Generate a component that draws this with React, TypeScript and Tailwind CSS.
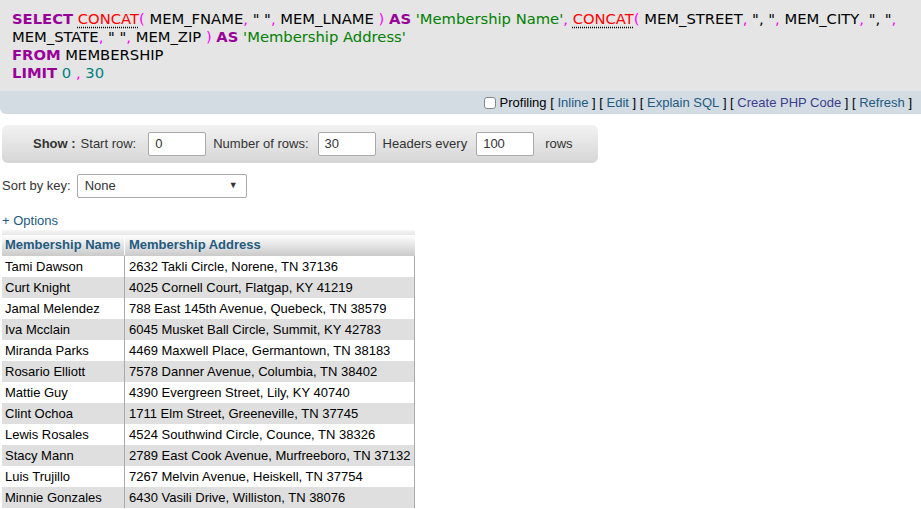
import React from "react";

const K = ({ c }: { c: string }) => <span className="font-bold text-[#990099]">{c}</span>;
const F = ({ c }: { c: string }) => (
  <span className="text-[#ff0000] underline decoration-dotted decoration-black underline-offset-[3px]">{c}</span>
);
const P = ({ c }: { c: string }) => <span className="text-[#ff00ff]">{c}</span>;
const S = ({ c }: { c: string }) => <span className="text-[#008000]">{c}</span>;
const N = ({ c }: { c: string }) => <span className="text-[#008080]">{c}</span>;

const rows: [string, string][] = [
  ["Tami Dawson", "2632 Takli Circle, Norene, TN 37136"],
  ["Curt Knight", "4025 Cornell Court, Flatgap, KY 41219"],
  ["Jamal Melendez", "788 East 145th Avenue, Quebeck, TN 38579"],
  ["Iva Mcclain", "6045 Musket Ball Circle, Summit, KY 42783"],
  ["Miranda Parks", "4469 Maxwell Place, Germantown, TN 38183"],
  ["Rosario Elliott", "7578 Danner Avenue, Columbia, TN 38402"],
  ["Mattie Guy", "4390 Evergreen Street, Lily, KY 40740"],
  ["Clint Ochoa", "1711 Elm Street, Greeneville, TN 37745"],
  ["Lewis Rosales", "4524 Southwind Circle, Counce, TN 38326"],
  ["Stacy Mann", "2789 East Cook Avenue, Murfreeboro, TN 37132"],
  ["Luis Trujillo", "7267 Melvin Avenue, Heiskell, TN 37754"],
  ["Minnie Gonzales", "6430 Vasili Drive, Williston, TN 38076"],
];

export default function App() {
  return (
    <div className="w-[921px] h-[509px] overflow-hidden bg-white font-['Liberation_Sans',Arial,sans-serif] text-[13px] text-black">
      <div className="h-[91px] bg-[#e5e5e5] pl-[12px] pt-[10px] font-['DejaVu_Sans',Verdana,sans-serif] text-[14.75px] leading-[18px] text-black whitespace-nowrap">
        <div>
          <K c="SELECT" /> <F c="CONCAT" /><P c="(" /> MEM_FNAME<P c="," /> " "<P c="," /> MEM_LNAME <P c=")" />{" "}
          <K c="AS" /> <S c="'Membership Name'" /><P c="," /> <F c="CONCAT" /><P c="(" /> MEM_STREET<P c="," /> ", "
          <P c="," /> MEM_CITY<P c="," /> ", "<P c="," />
        </div>
        <div>
          MEM_STATE<P c="," /> " "<P c="," /> MEM_ZIP <P c=")" /> <K c="AS" /> <S c="'Membership Address'" />
        </div>
        <div>
          <K c="FROM" /> MEMBERSHIP
        </div>
        <div>
          <K c="LIMIT" /> <N c="0" /> <P c="," /> <N c="30" />
        </div>
      </div>
      <div className="h-[23px] bg-[#d3dce3] rounded-bl-[6px] flex items-center justify-end pr-[9px] text-[13px] leading-none whitespace-pre">
        <span className="inline-block w-[12px] h-[12px] rounded-[3px] border border-[#888] bg-white mr-[4px]" />
        <span>Profiling [ </span>
        <span className="text-[#235a81]">Inline</span>
        <span> ] [ </span>
        <span className="text-[#235a81]">Edit</span>
        <span> ] [ </span>
        <span className="text-[#235a81]">Explain SQL</span>
        <span> ] [ </span>
        <span className="text-[#3c3c8c]">Create PHP Code</span>
        <span> ] [ </span>
        <span className="text-[#235a81]">Refresh</span>
        <span> ]</span>
      </div>
      <div className="mt-[11px] ml-[2px] w-[596px] h-[38px] rounded-[6px] bg-gradient-to-b from-[#f2f2f2] to-[#d6d6d6] flex items-center text-[#333]">
        <span className="ml-[31px] font-bold">Show :</span>
        <span className="ml-[5px]">Start row:</span>
        <div className="ml-[12px] w-[58px] h-[24px] border border-[#aaa] rounded-[2px] bg-white pl-[6px] flex items-center">0</div>
        <span className="ml-[7px]">Number of rows:</span>
        <div className="ml-[9px] w-[58px] h-[24px] border border-[#aaa] rounded-[2px] bg-white pl-[6px] flex items-center">30</div>
        <span className="ml-[7px]">Headers every</span>
        <div className="ml-[9px] w-[58px] h-[24px] border border-[#aaa] rounded-[2px] bg-white pl-[6px] flex items-center">100</div>
        <span className="ml-[11px]">rows</span>
      </div>
      <div className="mt-[11px] ml-[2px] flex items-center h-[24px] text-[#333]">
        <span>Sort by key:</span>
        <div className="ml-[6px] w-[170px] h-[24px] border border-[#aaa] rounded-[2px] bg-white pl-[7px] pr-[8px] flex items-center justify-between">
          <span>None</span>
          <span className="text-[9px] text-[#333]">▼</span>
        </div>
      </div>
      <div className="mt-[15px] ml-[2px] text-[#235a81] leading-[16px]">+ Options</div>
      <div className="ml-[2px] mt-[1px] w-[413px]">
        <div className="h-[5px] bg-gradient-to-b from-[#f6f6f6] to-[#e6e6e6]" />
        <div className="flex h-[21px] bg-gradient-to-b from-[#ffffff] to-[#cccccc] font-bold text-[#235a81] border-b border-[#ccc]">
          <div className="w-[123px] pl-[3px] flex items-center border-r border-[#fff]">Membership Name</div>
          <div className="flex-1 pl-[4px] flex items-center">Membership Address</div>
        </div>
        {rows.map(([n, a], i) => (
          <div key={n} className={`flex h-[21px] border-r border-[#aaa] ${i % 2 === 0 ? "bg-white" : "bg-[#dfdfdf]"}`}>
            <div className="w-[123px] pl-[3px] flex items-center border-r border-[#aaa]">{n}</div>
            <div className="flex-1 pl-[4px] flex items-center">{a}</div>
          </div>
        ))}
      </div>
    </div>
  );
}
